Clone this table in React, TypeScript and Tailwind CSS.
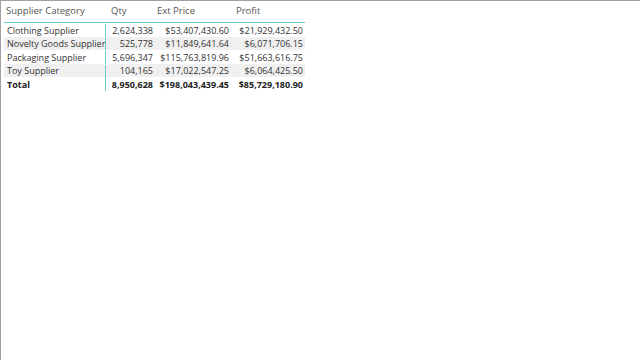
const rows = [
  { name: 'Clothing Supplier', qty: '2,624,338', ext: '$53,407,430.60', profit: '$21,929,432.50' },
  { name: 'Novelty Goods Supplier', qty: '525,778', ext: '$11,849,641.64', profit: '$6,071,706.15' },
  { name: 'Packaging Supplier', qty: '5,696,347', ext: '$115,763,819.96', profit: '$51,663,616.75' },
  { name: 'Toy Supplier', qty: '104,165', ext: '$17,022,547.25', profit: '$6,064,425.50' },
];

const font = { fontFamily: '"Segoe UI", "Open Sans", sans-serif' };

export default function App() {
  return (
    <div
      className="w-[640px] h-[360px] bg-white border-t border-l border-[#a0a0a0] overflow-hidden text-[9px] text-[#333333]"
      style={font}
    >
      <div className="ml-[3px] w-[301px]">
        {/* header */}
        <div className="grid grid-cols-[102px_49px_76px_74px] h-[22px] items-center pb-px border-b border-[#66cccc] text-[#555555] text-[9.5px]">
          <div className="pl-[2px]">Supplier Category</div>
          <div className="pl-[5px]">Qty</div>
          <div className="pl-[2px]">Ext Price</div>
          <div className="pl-[5px]">Profit</div>
        </div>

        {/* body */}
        {rows.map((r, i) => (
          <div
            key={r.name}
            className={`grid grid-cols-[102px_49px_76px_74px] h-[13.5px] items-center leading-none pt-px ${
              i % 2 === 1 ? 'bg-[#f0f0f0]' : ''
            }`}
          >
            <div className="pl-[3px] whitespace-nowrap border-r border-[#66cccc] h-full flex items-center">{r.name}</div>
            <div className="text-right pr-[2px]">{r.qty}</div>
            <div className="text-right pr-[2px]">{r.ext}</div>
            <div className="text-right pr-[2px]">{r.profit}</div>
          </div>
        ))}

        {/* total */}
        <div className="grid grid-cols-[102px_49px_76px_74px] h-[14px] items-center leading-none font-bold text-[#222222]">
          <div className="pl-[3px] border-r border-[#66cccc] h-full flex items-center">Total</div>
          <div className="text-right pr-[2px]">8,950,628</div>
          <div className="text-right pr-[2px]">$198,043,439.45</div>
          <div className="text-right pr-[2px]">$85,729,180.90</div>
        </div>
      </div>
    </div>
  );
}
